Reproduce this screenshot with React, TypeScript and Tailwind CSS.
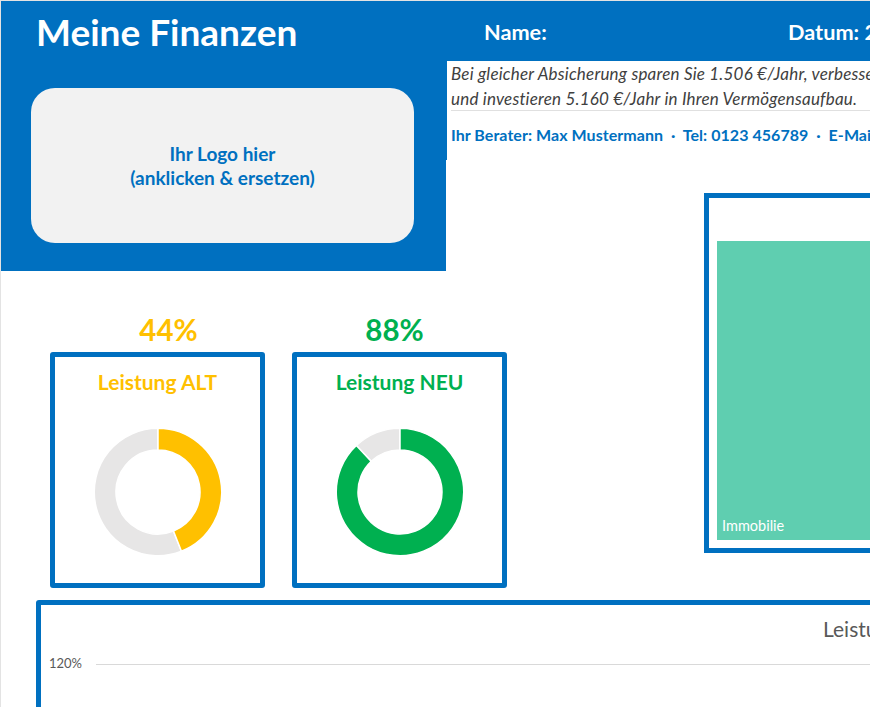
import React from 'react';

// one ring slice, angles in degrees clockwise from 12 o'clock
const slicePath = (from: number, to: number) => {
  const point = (deg: number, r: number) => {
    const a = ((deg - 90) * Math.PI) / 180;
    return `${(64 + r * Math.cos(a)).toFixed(2)} ${(64 + r * Math.sin(a)).toFixed(2)}`;
  };
  const large = to - from > 180 ? 1 : 0;
  return `M${point(from, 63.75)} A63.75 63.75 0 ${large} 1 ${point(to, 63.75)} L${point(to, 42)} A42 42 0 ${large} 0 ${point(from, 42)} Z`;
};

const Donut = ({ percent, color }: { percent: number; color: string }) => {
  const end = (percent / 100) * 360;
  return (
    <svg width="128" height="128" viewBox="0 0 128 128">
      <path d={slicePath(end, 360)} fill="#E7E6E6" stroke="#fff" strokeWidth="1.5" />
      <path d={slicePath(0, end)} fill={color} stroke="#fff" strokeWidth="1.5" />
    </svg>
  );
};

interface ScoreCardProps {
  percent: number;
  title: string;
  color: string;
  textClass: string;
  percentClass: string;
}

const ScoreCard = ({ percent, title, color, textClass, percentClass }: ScoreCardProps) => (
  <div className="w-[215px] shrink-0">
    <div className={`h-[41px] pt-[1px] text-center text-[29.5px] leading-[36px] font-bold ${textClass} ${percentClass}`}>
      {percent}%
    </div>
    <div className="h-[236px] rounded-[3px] border-[5px] border-[#0070C0] bg-white flex flex-col items-center">
      <div className={`mt-[10px] text-[21px] leading-[30px] font-bold ${textClass}`}>{title}</div>
      <div className="mt-[31px]">
        <Donut percent={percent} color={color} />
      </div>
    </div>
  </div>
);

export default function App() {
  return (
    <div
      className="w-[870px] h-[707px] overflow-hidden bg-white border-t border-l border-[#e3e3e3]"
      style={{ fontFamily: 'Lato, "Open Sans", sans-serif' }}
    >
      <div className="w-[1300px]">
        {/* header band */}
        <div className="h-[60px] bg-[#0070C0] flex text-white font-bold whitespace-nowrap">
          <div className="w-[483px] pl-[35px] text-[37px] leading-[62px]">Meine Finanzen</div>
          <div className="w-[304px] text-[21.7px] leading-[62px]">Name:</div>
          <div className="text-[21.7px] leading-[62px]">Datum: 2</div>
        </div>

        <div className="flex h-[539px]">
          {/* left column */}
          <div className="w-[445px] shrink-0">
            <div className="h-[210px] bg-[#0070C0] pl-[30px] pt-[27px]">
              <div className="w-[383px] h-[155px] rounded-[24px] bg-[#F2F2F2] flex items-center justify-center text-center text-[#0070C0] text-[19px] leading-[24px] font-bold">
                <div>
                  Ihr Logo hier
                  <br />
                  (anklicken &amp; ersetzen)
                </div>
              </div>
            </div>
            <div className="flex gap-[27px] pl-[49px] pt-[40px]">
              <ScoreCard percent={44} title="Leistung ALT" color="#FFC000" textClass="text-[#FFC000]" percentClass="pl-[22px]" />
              <ScoreCard percent={88} title="Leistung NEU" color="#00B050" textClass="text-[#00B050]" percentClass="pr-[10px]" />
            </div>
          </div>

          {/* right column */}
          <div className="flex-1">
            <div className="h-[99px] border-l border-[#0070C0] pl-[4px] whitespace-nowrap">
              <div className="h-[50px] border-b border-[#e0e0e0] italic text-[#404040] text-[17px] tracking-[0.2px] leading-[25px]">
                <div>Bei gleicher Absicherung sparen Sie 1.506 €/Jahr, verbessern Ihre Leistung</div>
                <div>und investieren 5.160 €/Jahr in Ihren Vermögensaufbau.</div>
              </div>
              <div className="pt-[13px] text-[#0070C0] text-[16px] tracking-[0.05px] leading-[22px] font-bold whitespace-pre">
                Ihr Berater: Max Mustermann  ·  Tel: 0123 456789  ·  E-Mail
              </div>
            </div>
            <div className="ml-[258px] mt-[33px] w-[700px] h-[360px] border-[5px] border-[#0070C0] bg-white pl-[8px] pt-[43px] pb-[8px]">
              <div className="h-full bg-[#5FCEB0] flex items-end pl-[5px] pb-[5px] text-white text-[14.5px] leading-[18px]">
                Immobilie
              </div>
            </div>
          </div>
        </div>

        {/* bottom chart panel */}
        <div className="ml-[35px] h-[200px] rounded-[3px] border-[5px] border-[#0070C0] bg-white">
          <div className="h-[49px] pl-[782px] pt-[9px] text-[#595959] text-[21px] leading-[30px]">Leistung</div>
          <div className="flex items-center pl-[8px] h-[20px]">
            <div className="w-[47px] text-[#595959] text-[13px]">120%</div>
            <div className="flex-1 h-px bg-[#d9d9d9]" />
          </div>
        </div>
      </div>
    </div>
  );
}
